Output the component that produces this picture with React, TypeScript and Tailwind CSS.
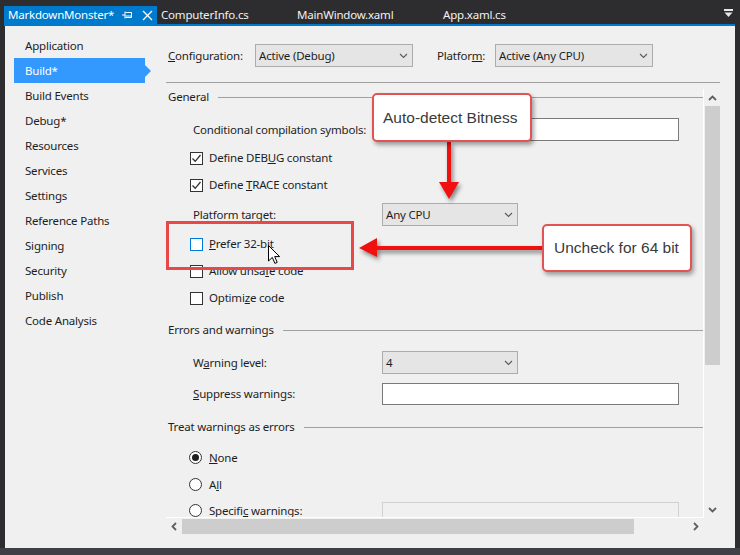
import type { ReactNode } from 'react';

const navItems = [
  'Application',
  'Build*',
  'Build Events',
  'Debug*',
  'Resources',
  'Services',
  'Settings',
  'Reference Paths',
  'Signing',
  'Security',
  'Publish',
  'Code Analysis',
];

function Chevron() {
  return (
    <svg width="9" height="6" viewBox="0 0 9 6" className="shrink-0">
      <path d="M1 1 L4.5 4.5 L8 1" fill="none" stroke="#5a5a5a" strokeWidth="1.1" />
    </svg>
  );
}

function Combo({ value, className }: { value: string; className: string }) {
  return (
    <div
      className={`h-[23px] border border-[#acacac] bg-[#e5e5e5] flex items-center justify-between pl-[3px] pr-[4px] ${className}`}
    >
      <span>{value}</span>
      <Chevron />
    </div>
  );
}

function Section({ title }: { title: string }) {
  return (
    <div className="flex items-center h-[16px] pl-[2px]">
      <span>{title}</span>
      <div className="flex-1 ml-[9px] h-px bg-[#a0a0a0]" />
    </div>
  );
}

function Check({ label, checked, hot, className }: { label: ReactNode; checked?: boolean; hot?: boolean; className: string }) {
  return (
    <div className={`flex items-center h-[16px] pl-[24px] gap-[6px] ${className}`}>
      <span
        className={`w-[13px] h-[13px] bg-white border flex items-center justify-center ${hot ? 'border-[#0078d7]' : 'border-[#333333]'}`}
      >
        {checked && (
          <svg width="11" height="11" viewBox="0 0 11 11">
            <path d="M1.5 5.5 L4.2 8.3 L9.5 2" fill="none" stroke="#333" strokeWidth="1.3" />
          </svg>
        )}
      </span>
      <span>{label}</span>
    </div>
  );
}

function Radio({ label, on, className }: { label: ReactNode; on?: boolean; className: string }) {
  return (
    <div className={`flex items-center h-[15px] leading-[15px] pl-[23px] gap-[7px] ${className}`}>
      <span className="w-[13px] h-[13px] rounded-full bg-white border border-[#333333] flex items-center justify-center">
        {on && <span className="w-[7px] h-[7px] rounded-full bg-[#1e1e1e]" />}
      </span>
      <span>{label}</span>
    </div>
  );
}

function FieldRow({ label, children, className }: { label: ReactNode; children: ReactNode; className: string }) {
  return (
    <div className={`flex items-center pl-[27px] ${className}`}>
      <span className="w-[189px] shrink-0">{label}</span>
      {children}
    </div>
  );
}

function Cursor() {
  return (
    <svg width="13" height="20" viewBox="0 0 13 20" className="absolute left-[268px] top-[245px]">
      <path
        d="M0.5 0.5 L0.5 16 L4.3 12.4 L6.9 18.4 L9.2 17.4 L6.7 11.6 L11.6 11.6 Z"
        fill="#fff"
        stroke="#000"
        strokeWidth="1"
        strokeLinejoin="miter"
      />
    </svg>
  );
}

export default function App() {
  return (
    <div className="relative w-[740px] h-[555px] bg-[#2d2d30] flex flex-col overflow-hidden font-['Segoe_UI','Noto_Sans',sans-serif] text-[11.5px] tracking-[-0.2px] text-[#1e1e1e]">
      {/* document tabs */}
      <div className="h-[24px] flex items-end pl-[4px] pr-[6px] text-[#f1f1f1]">
        <div className="h-[18px] w-[153px] bg-[#007acc] flex items-center pl-[4px] text-white">
          <span>MarkdownMonster*</span>
          <svg width="11" height="10" viewBox="0 0 11 10" className="ml-[8px]">
            <path d="M0 5 H3 M3 1.5 V8.5 M3.5 2.5 H9.5 V7.5 H3.5 M3.5 6 H9.5" fill="none" stroke="#fff" strokeWidth="1" />
          </svg>
          <svg width="11" height="11" viewBox="0 0 11 11" className="ml-[9px]">
            <path d="M1 1 L10 10 M10 1 L1 10" stroke="#fff" strokeWidth="1.3" />
          </svg>
        </div>
        <div className="h-[18px] flex items-center pl-[4px] w-[140px]">ComputerInfo.cs</div>
        <div className="h-[18px] flex items-center w-[146px]">MainWindow.xaml</div>
        <div className="h-[18px] flex items-center">App.xaml.cs</div>
        <div className="flex-1" />
        <svg width="9" height="9" viewBox="0 0 9 9" className="mb-[6px] mr-[1px]">
          <rect x="0" y="0" width="9" height="2" fill="#e8e8e8" />
          <path d="M0.5 3.5 H8.5 L4.5 8 Z" fill="#e8e8e8" />
        </svg>
      </div>
      <div className="h-[2px] ml-[4px] mr-[5px] bg-[#007acc]" />

      {/* property page */}
      <div className="flex-1 mx-[5px] bg-[#f0f0f0] flex">
        <div className="w-[161px] pt-[7px] flex flex-col">
          {navItems.map((item) =>
            item === 'Build*' ? (
              <div key={item} className="h-[25px] flex items-center">
                <div className="ml-[9px] w-[131px] h-[25px] bg-[#3399ff] text-white flex items-center pl-[11px]">
                  {item}
                </div>
                <div className="w-0 h-0 border-y-[6px] border-y-transparent border-l-[6px] border-l-[#3399ff]" />
              </div>
            ) : (
              <div key={item} className="h-[25px] flex items-center pl-[20px]">
                {item}
              </div>
            ),
          )}
        </div>

        <div className="flex-1 flex flex-col pr-[15px]">
          <div className="flex items-center mt-[18px] pl-[2px]">
            <span className="w-[87px]">
              <u>C</u>onfiguration:
            </span>
            <Combo value="Active (Debug)" className="w-[158px]" />
            <span className="ml-[24px] w-[58px]">
              Platfor<u>m</u>:
            </span>
            <Combo value="Active (Any CPU)" className="w-[158px]" />
          </div>
          <div className="mt-[15px] h-px bg-[#a0a0a0]" />

          <div className="mt-[6px] flex flex-col">
            <div className="flex h-[429px]">
              <div className="w-[538px] border-r border-b border-white overflow-hidden flex flex-col">
                <Section title="General" />
                <FieldRow label="Conditional compilation symbols:" className="mt-[13px]">
                  <div className="w-[297px] h-[23px] bg-white border border-[#7a7a7a]" />
                </FieldRow>
                <Check
                  checked
                  className="mt-[9px]"
                  label={
                    <>
                      Define DEB<u>U</u>G constant
                    </>
                  }
                />
                <Check
                  checked
                  className="mt-[11px]"
                  label={
                    <>
                      Define <u>T</u>RACE constant
                    </>
                  }
                />
                <FieldRow label="Platform target:" className="mt-[10px]">
                  <Combo value="Any CPU" className="w-[136px]" />
                </FieldRow>
                <Check
                  hot
                  className="mt-[10px]"
                  label={
                    <>
                      <u>P</u>refer 32-bit
                    </>
                  }
                />
                <Check
                  className="mt-[11px]"
                  label={
                    <>
                      Allow unsa<u>f</u>e code
                    </>
                  }
                />
                <Check
                  className="mt-[11px]"
                  label={
                    <>
                      Optimi<u>z</u>e code
                    </>
                  }
                />
                <div className="mt-[16px]">
                  <Section title="Errors and warnings" />
                </div>
                <FieldRow
                  className="mt-[13px]"
                  label={
                    <>
                      W<u>a</u>rning level:
                    </>
                  }
                >
                  <Combo value="4" className="w-[136px] h-[22px]" />
                </FieldRow>
                <FieldRow
                  className="mt-[9px]"
                  label={
                    <>
                      <u>S</u>uppress warnings:
                    </>
                  }
                >
                  <div className="w-[297px] h-[22px] bg-white border border-[#7a7a7a]" />
                </FieldRow>
                <div className="mt-[14px]">
                  <Section title="Treat warnings as errors" />
                </div>
                <Radio
                  on
                  className="mt-[15px]"
                  label={
                    <>
                      <u>N</u>one
                    </>
                  }
                />
                <Radio
                  className="mt-[12px]"
                  label={
                    <>
                      A<u>l</u>l
                    </>
                  }
                />
                <div className="mt-[11px] flex items-start">
                  <Radio
                    className="w-[216px]"
                    label={
                      <>
                        Specifi<u>c</u> warnings:
                      </>
                    }
                  />
                  <div className="mt-[-1px] w-[297px] h-[22px] bg-[#f0f0f0] border border-[#d0d0d0]" />
                </div>
              </div>

              {/* vertical scrollbar */}
              <div className="w-[16px] flex flex-col items-center">
                <div className="h-[17px] flex items-center justify-center">
                  <svg width="9" height="6" viewBox="0 0 9 6">
                    <path d="M1 5 L4.5 1.5 L8 5" fill="none" stroke="#606060" strokeWidth="1.8" />
                  </svg>
                </div>
                <div className="w-[15px] h-[259px] bg-[#cdcdcd]" />
                <div className="flex-1" />
                <div className="h-[17px] flex items-center justify-center">
                  <svg width="9" height="6" viewBox="0 0 9 6">
                    <path d="M1 1 L4.5 4.5 L8 1" fill="none" stroke="#606060" strokeWidth="1.8" />
                  </svg>
                </div>
              </div>
            </div>

            {/* horizontal scrollbar */}
            <div className="flex h-[16px] w-[538px] items-center">
              <div className="w-[16px] flex justify-center">
                <svg width="6" height="9" viewBox="0 0 6 9">
                  <path d="M5 1 L1.5 4.5 L5 8" fill="none" stroke="#606060" strokeWidth="1.8" />
                </svg>
              </div>
              <div className="w-[452px] h-[15px] bg-[#cdcdcd]" />
              <div className="flex-1" />
              <div className="w-[16px] flex justify-center">
                <svg width="6" height="9" viewBox="0 0 6 9">
                  <path d="M1 1 L4.5 4.5 L1 8" fill="none" stroke="#606060" strokeWidth="1.8" />
                </svg>
              </div>
            </div>
          </div>
        </div>
      </div>
      <div className="h-[7px] bg-[#3f3f46]" />

      {/* annotations */}
      <div className="absolute left-[166px] top-[221px] w-[188px] h-[49px] border-[3px] border-[#e84848]" />

      <svg
        width="28"
        height="64"
        viewBox="0 0 28 64"
        className="absolute left-[437px] top-[140px] drop-shadow-[2px_3px_2px_rgba(0,0,0,0.45)]"
      >
        <rect x="10" y="2" width="4" height="41" fill="#f01010" />
        <path d="M2 42 H22 L12 59 Z" fill="#f01010" />
      </svg>

      <svg
        width="192"
        height="28"
        viewBox="0 0 192 28"
        className="absolute left-[355px] top-[235px] drop-shadow-[2px_3px_2px_rgba(0,0,0,0.45)]"
      >
        <path d="M4 13 L22 3 V22 Z" fill="#f01010" />
        <rect x="21" y="11" width="168" height="4" fill="#f01010" />
      </svg>

      <div className="absolute left-[372px] top-[93px] w-[160px] h-[49px] bg-white border-2 border-[#e05454] rounded-[5px] shadow-[2px_3px_4px_rgba(0,0,0,0.35)] flex items-center pl-[9px] font-['Liberation_Sans',Arial,sans-serif] text-[15.5px] tracking-normal text-[#3a3a3a]">
        Auto-detect Bitness
      </div>
      <div className="absolute left-[542px] top-[224px] w-[150px] h-[48px] bg-white border-2 border-[#e05454] rounded-[5px] shadow-[2px_3px_4px_rgba(0,0,0,0.35)] flex items-center pl-[10px] font-['Liberation_Sans',Arial,sans-serif] text-[15.5px] tracking-normal text-[#3a3a3a]">
        Uncheck for 64 bit
      </div>

      <Cursor />
    </div>
  );
}
